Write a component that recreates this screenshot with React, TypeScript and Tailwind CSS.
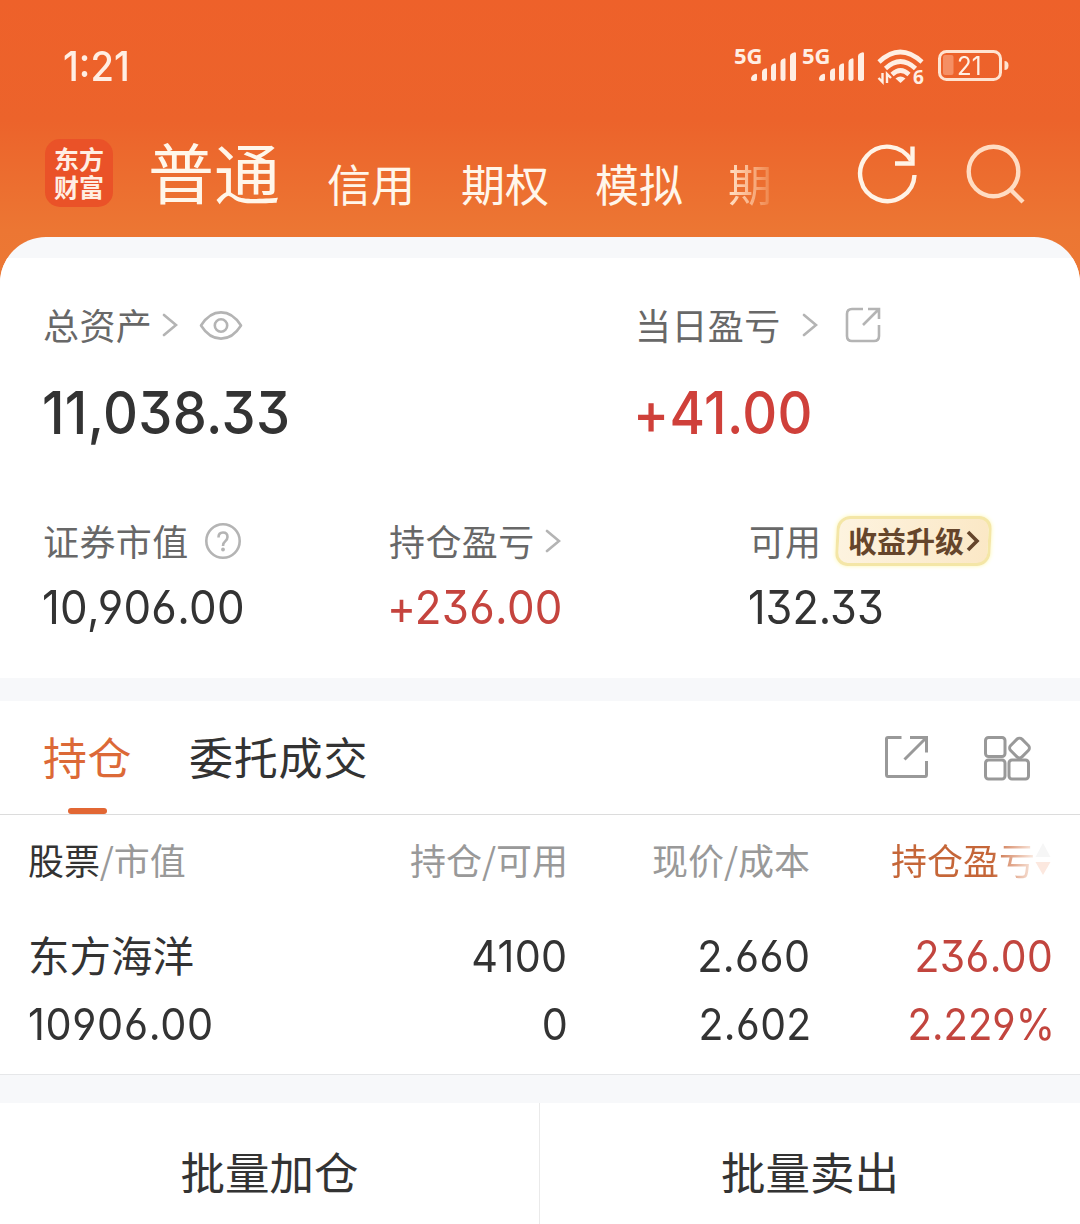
import React from "react";

const cjk = "font-['Noto_Sans_CJK_SC',sans-serif] whitespace-nowrap";

type NumProps = { children: React.ReactNode; className?: string };

function Num({ children, className = "" }: NumProps) {
  return (
    <span
      className={`inline-block whitespace-nowrap font-['Inter',sans-serif] [font-feature-settings:'cv03','cv04','cv09'] ${className}`}
    >
      {children}
    </span>
  );
}

function Chevron({ className = "" }: { className?: string }) {
  return (
    <svg className={`shrink-0 ${className}`} width="16" height="26" viewBox="0 0 16 26" fill="none" stroke="#b4b4b4" strokeWidth="2.6" strokeLinecap="round">
      <path d="M2 3 L14 13 L2 23" />
    </svg>
  );
}

function Signal() {
  return (
    <div className="flex w-[64px] items-start text-[#ffeee3]">
      <span className="-mt-[3px] -mr-[11px] w-[28px] origin-left font-['Open_Sans',sans-serif] text-[22px] leading-[22px] font-bold">5G</span>
      <svg width="47" height="38" viewBox="17 0 47 38" fill="currentColor">
        <path d="M17 32q0-3 3-4.500l1-.6q2-.6 2 1V32q0 2-2 2h-2q-2 0-2-2z" />
        <path d="M28 25q0-2 2-3l1.500-.6q1.500-.4 1.500 1V32q0 2-2.500 2T28 32z" />
        <path d="M37 20q0-2 2-3l1.500-.6q1.500-.4 1.500 1V32q0 2-2.500 2T37 32z" />
        <path d="M46.500 15q0-2 2-3l1.500-.6q1.500-.4 1.500 1V32q0 2-2.500 2t-2.500-2z" />
        <path d="M56 9q0-2 2.500-3l1.500-.6q2-.4 2 1V32q0 2-3 2t-3-2z" />
      </svg>
    </div>
  );
}

function Wifi() {
  return (
    <div className="relative">
      <svg width="50" height="40" viewBox="0 0 50 40" fill="none" stroke="#ffeee3">
        <g strokeWidth="4.600">
          <path d="M3 15 Q24 -5 46 15" />
          <path d="M9.500 21.500 Q24.500 7.500 39.500 21.500" />
          <path d="M16 27.500 Q24.500 19.500 33 27.500" />
        </g>
        <path d="M24.500 36 L19.500 31.500 Q24.500 27.500 29.500 31.500z" fill="#ffeee3" stroke="none" />
        <path d="M6.500 26v9l-4-4M11 36v-9l4 4" strokeWidth="2.400" />
      </svg>
      <span className="absolute top-[20px] left-[37px] font-['Open_Sans',sans-serif] text-[19px] leading-[20px] font-bold text-[#ffeee3]">6</span>
    </div>
  );
}

function Battery() {
  return (
    <div className="relative">
      <svg width="74" height="34" viewBox="0 0 74 34" fill="none">
        <rect x="2.500" y="2.500" width="61" height="28" rx="7" stroke="#ffe3d0" strokeWidth="3" />
        <rect x="6" y="6" width="10.500" height="20" rx="2" fill="#f58f64" />
        <path d="M67.500 12q4 0 4 4.500t-4 4.500z" fill="#ffe3d0" />
      </svg>
      <Num className="absolute top-[4px] left-[20px] origin-left scale-x-[.96] text-[25px] leading-[26px] text-[#fff0e4]">21</Num>
    </div>
  );
}

function Header() {
  return (
    <header className="h-[237px]">
      <div className="flex h-[132px] items-center">
        <Num className="ml-[63px] w-[400px] origin-left scale-x-[.93] text-[41px] leading-none font-medium text-[#ffeee3]">1:21</Num>
        <div className="ml-[271px] flex items-center">
          <Signal />
          <div className="ml-1"><Signal /></div>
          <div className="ml-[10px] mt-[2px]"><Wifi /></div>
          <div className="ml-[11px]"><Battery /></div>
        </div>
      </div>
      <div className={`flex h-[105px] ${cjk} text-[#fff6ea]`}>
        <div className="ml-[45px] mt-[7px] flex h-[68px] w-[68px] flex-col items-center justify-center rounded-[15px] bg-[#ea5228] pb-[3px] text-[25px] leading-[28px] font-bold text-[#ffeee3]">
          <span>东方</span>
          <span>财富</span>
        </div>
        <div className="ml-[35px] mt-[4px] w-[179px] text-[66px] leading-[68px]">普通</div>
        <div className="mt-[19px] w-[134px] text-[44px] leading-[64px]">信用</div>
        <div className="mt-[19px] w-[134px] text-[44px] leading-[64px]">期权</div>
        <div className="mt-[19px] w-[133px] text-[44px] leading-[64px]">模拟</div>
        <div className="mt-[19px] w-[48px] bg-linear-to-r from-[#ffd9bb] from-10% to-[#f08a50] to-85% bg-clip-text text-[44px] leading-[64px] text-transparent">期</div>
        <svg className="ml-[81px] mt-[10px]" width="64" height="64" viewBox="0 0 64 64" fill="none" stroke="#fff3e6" strokeWidth="4.400">
          <path d="M57.500 33 A27.200 27.200 0 1 1 54 18.500" />
          <path d="M55.500 4.500V21.500H38" />
        </svg>
        <svg className="ml-[44px] mt-[11px]" width="64" height="64" viewBox="0 0 64 64" fill="none" stroke="#ffdcc2" strokeWidth="4.400">
          <circle cx="28.500" cy="28.500" r="24.800" />
          <path d="M45.500 46.500 L58 59" />
        </svg>
      </div>
    </header>
  );
}

function Assets() {
  return (
    <section className="h-[420px] bg-white">
      <div className={`flex h-[134px] items-center ${cjk} text-[36px] text-[#686868]`}>
        <div className="flex w-[636px] items-center pl-[43px]">
          <span className="w-[119px] pb-[3px] leading-[50px] tracking-[.4px]">总资产</span>
          <Chevron />
          <svg className="ml-[21px]" width="44" height="32" viewBox="0 0 44 32" fill="none" stroke="#b4b4b4" strokeWidth="2.600">
            <path d="M2 16.500C13-1 31-1 42 16.500C31 34 13 34 2 16.500Z" strokeLinejoin="round" />
            <circle cx="22" cy="16.500" r="6.200" />
          </svg>
        </div>
        <span className="-ml-px w-[167px] pb-[3px] leading-[50px] tracking-[.4px]">当日盈亏</span>
        <Chevron />
        <svg className="ml-[26px]" width="38" height="38" viewBox="0 0 38 38" fill="none" stroke="#b4b4b4" strokeWidth="2.600">
          <path d="M19 3H8Q3 3 3 8v22q0 5 5 5h22q5 0 5-5V19" />
          <path d="M24 3H35V13M35 3L19 19" />
        </svg>
      </div>
      <div className="flex h-[40px] items-center text-[59px] leading-[40px] font-medium tracking-[.4px]">
        <div className="w-[636px] pl-[42px] text-[#333]"><Num className="origin-left scale-x-[.918]">11,038.33</Num></div>
        <div className="-ml-[3px] text-[#cf403a]"><Num className="origin-left scale-x-[.918]">+41.00</Num></div>
      </div>
      <div className={`mt-[79px] flex h-[60px] items-center ${cjk} text-[36px] text-[#686868]`}>
        <div className="flex w-[389px] items-center pl-[43px]">
          <span className="w-[161px] pb-[3px] leading-[50px] tracking-[.4px]">证券市值</span>
          <svg width="38" height="38" viewBox="0 0 38 38" fill="none" stroke="#b4b4b4">
            <circle cx="19" cy="19" r="16.700" strokeWidth="2.600" />
            <path d="M14.500 15.500Q14.500 10.500 19 10.500T23.500 15Q23.500 17.500 21 19.500Q19 21 19 24" strokeWidth="2.600" />
            <circle cx="19" cy="27.500" r="1.900" fill="#b4b4b4" stroke="none" />
          </svg>
        </div>
        <div className="flex w-[360px] items-center">
          <span className="w-[156px] pb-[3px] leading-[50px] tracking-[.4px]">持仓盈亏</span>
          <Chevron />
        </div>
        <span className="w-[87px] pb-[3px] leading-[50px]">可用</span>
        <div className="flex h-[50px] w-[155px] -skew-x-3 items-center rounded-[13px] border-[3px] border-[#f4e6a6] bg-linear-to-r from-[#fdf3df] to-[#fbe8c6] shadow-[0_0_4px_#fdf8b0]">
          <span className="flex skew-x-3 items-center pb-[2px] pl-[9px] text-[29px] leading-[40px] font-bold text-[#65452b]">
            收益升级
            <svg className="mt-[2px] ml-[2px]" width="14" height="22" viewBox="0 0 14 22" fill="none" stroke="#65452b" strokeWidth="3.600">
              <path d="M2 2L11 11L2 20" />
            </svg>
          </span>
        </div>
      </div>
      <div className="mt-[15px] flex h-[40px] items-center text-[47px] leading-[40px] tracking-[.3px]">
        <div className="w-[389px] pl-[42px] text-[#333]"><Num className="origin-left scale-x-[.933]">10,906.00</Num></div>
        <div className="w-[360px] text-[#c5443e]"><Num className="-ml-[2px] origin-left scale-x-[.933]">+236.00</Num></div>
        <div className="-ml-px text-[#333]"><Num className="origin-left scale-x-[.92] tracking-normal">132.33</Num></div>
      </div>
    </section>
  );
}

function Tabs() {
  return (
    <nav className={`relative flex h-[114px] items-center border-b border-[#dcdcdc] bg-white ${cjk} text-[44px]`}>
      <span className="ml-[43px] w-[146px] pb-[3px] leading-[60px] tracking-[.4px] text-[#dc6937]">持仓</span>
      <span className="w-[693px] pb-[3px] leading-[60px] tracking-[.8px] text-[#333]">委托成交</span>
      <svg className="-mt-[2px]" width="50" height="50" viewBox="0 0 50 50" fill="none" stroke="#999" strokeWidth="3">
        <path d="M19.500 5.500H6Q4.500 5.500 4.500 7V42.500Q4.500 44.500 6 44.500H43Q44.500 44.500 44.500 42.500V29" />
        <path d="M28 5.500H44.500V20.500M44.500 5.500L22.500 27.500" />
      </svg>
      <svg className="-mt-[2px] ml-[50px]" width="50" height="50" viewBox="0 0 50 50" fill="none" stroke="#999" strokeWidth="3">
        <rect x="3.500" y="5.500" width="19.500" height="19" rx="3" />
        <rect x="3.500" y="28" width="19.500" height="19" rx="3" />
        <rect x="27" y="28" width="19.500" height="19" rx="3" />
        <rect x="29.500" y="8" width="16" height="16" rx="3.500" transform="rotate(45 37.500 16)" />
      </svg>
      <span className="absolute bottom-0 left-[68px] h-[6px] w-[39px] rounded-full bg-[#e26734]" />
    </nav>
  );
}

const cols = "grid grid-cols-[269px_270px_242px_242px] pl-[29px]";

function Holdings() {
  return (
    <section className="h-[260px] border-b border-[#e6e7e9] bg-white">
      <div className={`${cols} h-[87px] items-center ${cjk} text-[36px] text-[#999]`}>
        <span className="-ml-px tracking-[-.1px]"><span className="text-[#333]">股票</span>/市值</span>
        <span className="text-right">持仓/可用</span>
        <span className="text-right">现价/成本</span>
        <span className="flex items-center justify-end">
          <span className="bg-linear-to-r from-[#c56638] from-70% to-[#faeee6] bg-clip-text text-transparent">持仓盈亏</span>
          <svg className="mr-px" width="16" height="34" viewBox="0 0 16 34">
            <path d="M8 1L15.500 15H.5z" fill="#f6f6f6" />
            <path d="M8 33L15.500 20H.5z" fill="#fce8df" />
          </svg>
        </span>
      </div>
      <div className={`${cols} mt-[19px] h-[68px] items-center text-[44px] tracking-[.4px] text-[#333]`}>
        <span className={`${cjk} -ml-px pb-[2px] text-[41.500px] leading-[60px] tracking-normal`}>东方海洋</span>
        <span className="text-right"><Num className="origin-right scale-x-[.94]">4100</Num></span>
        <span className="text-right"><Num className="origin-right scale-x-[.94]">2.660</Num></span>
        <span className="text-right text-[#c2453e]"><Num className="-mr-px origin-right scale-x-[.93]">236.00</Num></span>
      </div>
      <div className={`${cols} h-[68px] items-center text-[44px] tracking-[.4px] text-[#333]`}>
        <span className="-ml-px"><Num className="origin-left scale-x-[.942] tracking-[.7px]">10906.00</Num></span>
        <span className="text-right"><Num className="origin-right scale-x-[.94]">0</Num></span>
        <span className="text-right"><Num className="-mr-[2px] origin-right scale-x-[.93]">2.602</Num></span>
        <span className="text-right text-[#c2453e]"><Num className="-mr-[3px] origin-right scale-x-[.91] tracking-normal">2.229%</Num></span>
      </div>
    </section>
  );
}

export default function App() {
  return (
    <div className="h-[1224px] w-[1080px] overflow-hidden bg-[linear-gradient(180deg,#ee612a_0px,#ec632b_120px,#ec7633_230px,#ec7935_290px)]">
      <Header />
      <main className="overflow-hidden rounded-t-[46px] bg-[#f7f8fa] pt-[21px]">
        <Assets />
        <div className="h-[23px]" />
        <Tabs />
        <Holdings />
        <div className={`mt-[28px] grid h-[121px] grid-cols-[540px_540px] bg-white ${cjk} text-[44.500px] text-[#333]`}>
          <button className="border-r border-[#eaeaea] pt-[15px] leading-[106px]">批量加仓</button>
          <button className="pt-[15px] leading-[106px]">批量卖出</button>
        </div>
      </main>
    </div>
  );
}
